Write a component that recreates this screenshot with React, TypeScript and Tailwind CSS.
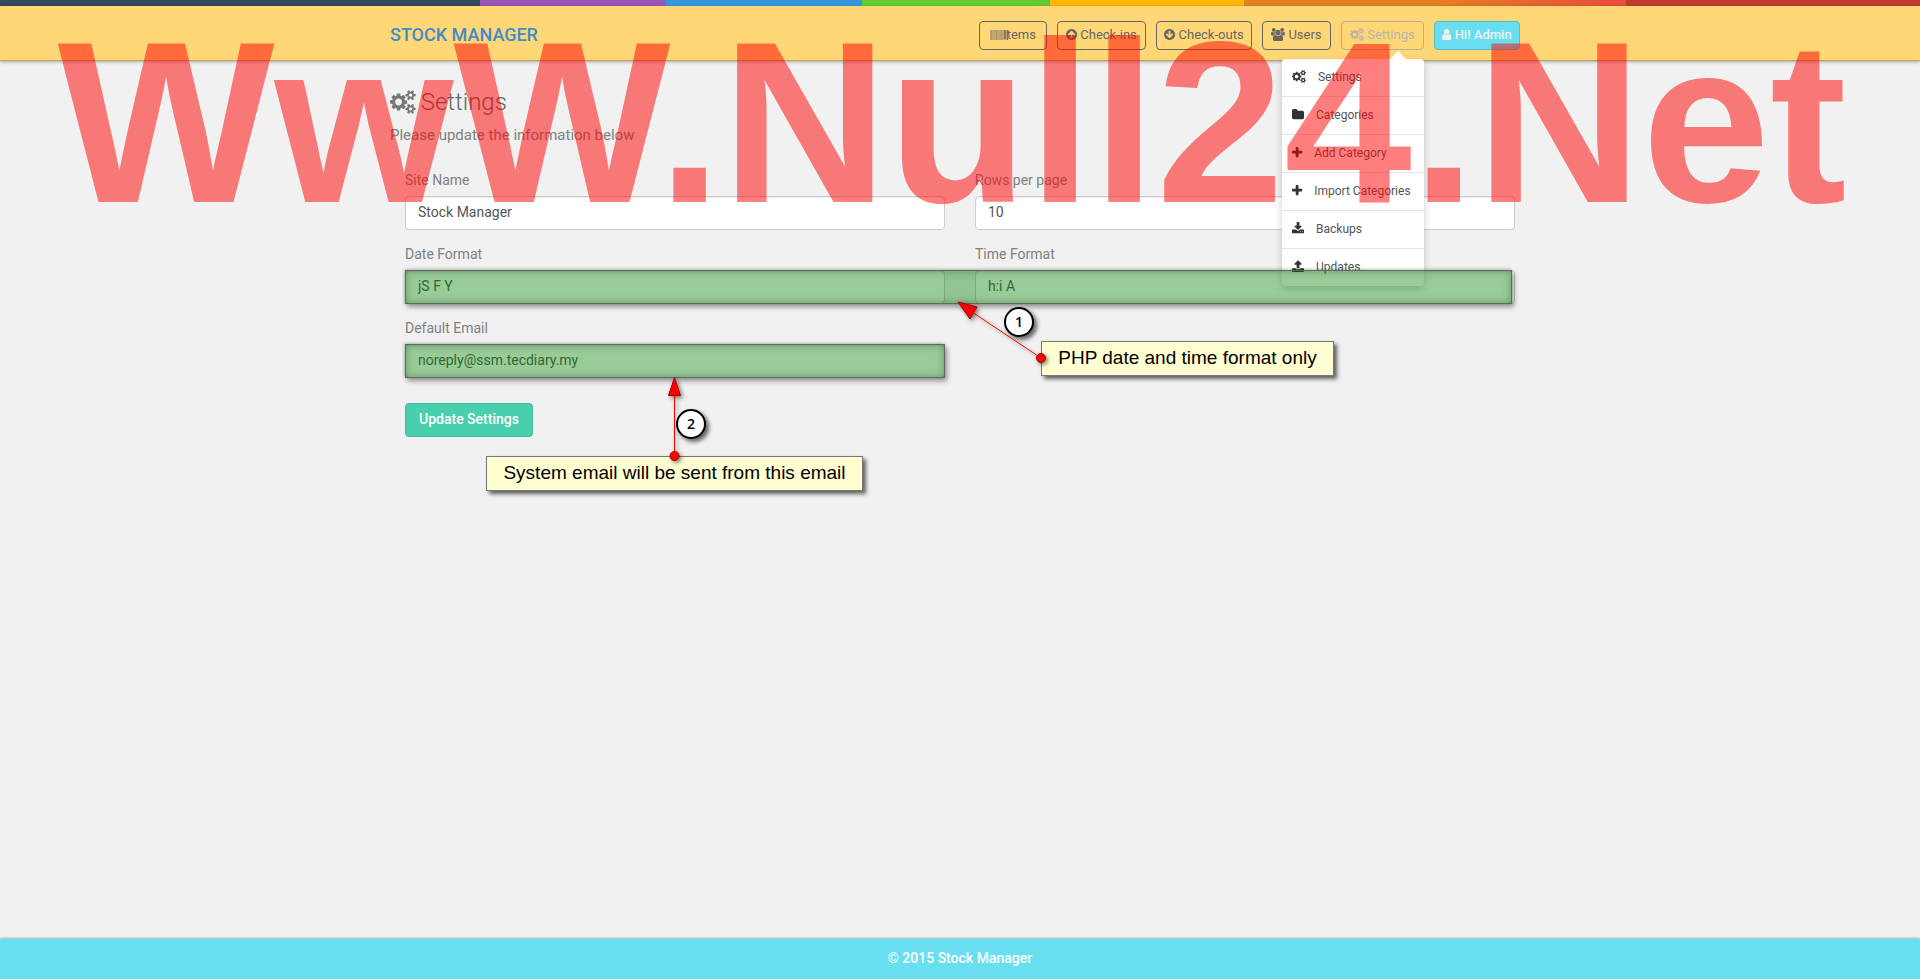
import React from "react";

type Glyph = { x: number; w: number; d: string };

const COGS: Glyph = {
  x: 0,
  w: 1920,
  d: "M896 896q0-106-75-181t-181-75-181 75-75 181 75 181 181 75 181-75 75-181zm768 512q0-52-38-90t-90-38-90 38-38 90q0 53 37.5 90.5t90.5 37.5 90.5-37.5 37.5-90.5zm0-1024q0-52-38-90t-90-38-90 38-38 90q0 53 37.5 90.5t90.5 37.5 90.5-37.5 37.5-90.5zm-384 421v185q0 10-7 19.5t-16 10.5l-155 24q-11 35-32 76 34 48 90 115 7 11 7 20 0 12-7 19-23 30-82.5 89.5t-78.5 59.5q-11 0-21-7l-115-90q-37 19-77 31-11 108-23 155-7 24-30 24h-186q-11 0-20-7.5t-10-17.5l-23-153q-34-10-75-31l-118 89q-7 7-20 7-11 0-21-8-144-133-144-160 0-9 7-19 10-14 41-53t47-61q-23-44-35-82l-152-24q-10-1-17-9.5t-7-19.5v-185q0-10 7-19.5t16-10.5l155-24q11-35 32-76-34-48-90-115-7-11-7-20 0-12 7-20 22-30 82-89t79-59q11 0 21 7l115 90q34-18 77-32 11-108 23-154 7-24 30-24h186q11 0 20 7.5t10 17.5l23 153q34 10 75 31l118-89q8-7 20-7 11 0 21 8 144 133 144 160 0 8-7 19-12 16-42 54t-45 60q23 48 34 82l152 23q10 2 17 10.5t7 19.5zm640 533v140q0 16-149 31-12 27-30 52 51 113 51 138 0 4-4 7-122 71-124 71-8 0-46-47t-52-68q-20 2-30 2t-30-2q-14 21-52 68t-46 47q-2 0-124-71-4-3-4-7 0-25 51-138-18-25-30-52-149-15-149-31v-140q0-16 149-31 13-29 30-52-51-113-51-138 0-4 4-7 4-2 35-20t59-34 30-16q8 0 46 46.5t52 67.5q20-2 30-2t30 2q51-71 92-112l6-2q4 0 124 70 4 3 4 7 0 25-51 138 17 23 30 52 149 15 149 31zm0-1024v140q0 16-149 31-12 27-30 52 51 113 51 138 0 4-4 7-122 71-124 71-8 0-46-47t-52-68q-20 2-30 2t-30-2q-14 21-52 68t-46 47q-2 0-124-71-4-3-4-7 0-25 51-138-18-25-30-52-149-15-149-31v-140q0-16 149-31 13-29 30-52-51-113-51-138 0-4 4-7 4-2 35-20t59-34 30-16q8 0 46 46.5t52 67.5q20-2 30-2t30 2q51-71 92-112l6-2q4 0 124 70 4 3 4 7 0 25-51 138 17 23 30 52 149 15 149 31z",
};
const UP: Glyph = {
  x: 128,
  w: 1536,
  d: "M1412 895q0-27-18-45l-362-362-91-91q-18-18-45-18t-45 18l-91 91-362 362q-18 18-18 45t18 45l91 91q18 18 45 18t45-18l189-189v502q0 26 19 45t45 19h128q26 0 45-19t19-45v-502l189 189q19 19 45 19t45-19l91-91q18-18 18-45zm252 1q0 209-103 385.5t-279.5 279.5-385.5 103-385.5-103-279.5-279.5-103-385.5 103-385.5 279.5-279.5 385.5-103 385.5 103 279.5 279.5 103 385.5z",
};
const USERS: Glyph = {
  x: 0,
  w: 1920,
  d: "M593 896q-162 5-265 128h-134q-82 0-138-40.5t-56-118.5q0-353 124-353 6 0 43.5 21t97.5 42.5 119 21.5q67 0 133-23-5 37-5 66 0 139 81 256zm1071 637q0 120-73 189.5t-194 69.5h-874q-121 0-194-69.5t-73-189.5q0-53 3.5-103.5t14-109 26.5-108.5 43-97.5 62-81 85.5-53.5 111.5-20q10 0 43 21.5t73 48 107 48 135 21.5 135-21.5 107-48 73-48 43-21.5q61 0 111.5 20t85.5 53.5 62 81 43 97.5 26.5 108.5 14 109 3.5 103.5zm-1024-1277q0 106-75 181t-181 75-181-75-75-181 75-181 181-75 181 75 75 181zm704 384q0 159-112.5 271.5t-271.5 112.5-271.5-112.5-112.5-271.5 112.5-271.5 271.5-112.5 271.5 112.5 112.5 271.5zm576 225q0 78-56 118.5t-138 40.5h-134q-103-123-265-128 81-117 81-256 0-29-5-66 66 23 133 23 59 0 119-21.5t97.5-42.5 43.5-21q124 0 124 353zm-128-609q0 106-75 181t-181 75-181-75-75-181 75-181 181-75 181 75 75 181z",
};
const USER: Glyph = {
  x: 256,
  w: 1280,
  d: "M1536 1399q0 109-62.5 187t-150.5 78h-854q-88 0-150.5-78t-62.5-187q0-85 8.5-160.5t31.5-152 58.5-131 94-89 134.5-34.5q131 128 313 128t313-128q76 0 134.5 34.5t94 89 58.5 131 31.5 152 8.5 160.5zm-256-887q0 159-112.5 271.5t-271.5 112.5-271.5-112.5-112.5-271.5 112.5-271.5 271.5-112.5 271.5 112.5 112.5 271.5z",
};
const FOLDER: Glyph = {
  x: 64,
  w: 1664,
  d: "M1728 608v704q0 92-66 158t-158 66h-1216q-92 0-158-66t-66-158v-960q0-92 66-158t158-66h320q92 0 158 66t66 158v32h672q92 0 158 66t66 158z",
};
const PLUS: Glyph = {
  x: 192,
  w: 1408,
  d: "M1600 736v192q0 40-28 68t-68 28h-416v416q0 40-28 68t-68 28h-192q-40 0-68-28t-28-68v-416h-416q-40 0-68-28t-28-68v-192q0-40 28-68t68-28h416v-416q0-40 28-68t68-28h192q40 0 68 28t28 68v416h416q40 0 68 28t28 68z",
};
const DOWNLOAD: Glyph = {
  x: 64,
  w: 1664,
  d: "M1344 1344q0-26-19-45t-45-19-45 19-19 45 19 45 45 19 45-19 19-45zm256 0q0-26-19-45t-45-19-45 19-19 45 19 45 45 19 45-19 19-45zm128-224v320q0 40-28 68t-68 28h-1472q-40 0-68-28t-28-68v-320q0-40 28-68t68-28h465l135 136q58 56 136 56t136-56l136-136h464q40 0 68 28t28 68zm-325-569q17 41-14 70l-448 448q-18 19-45 19t-45-19l-448-448q-31-29-14-70 17-39 59-39h256v-448q0-26 19-45t45-19h256q26 0 45 19t19 45v448h256q42 0 59 39z",
};
const UPLOAD: Glyph = {
  x: 64,
  w: 1664,
  d: "M1344 1472q0-26-19-45t-45-19-45 19-19 45 19 45 45 19 45-19 19-45zm256 0q0-26-19-45t-45-19-45 19-19 45 19 45 45 19 45-19 19-45zm128-224v320q0 40-28 68t-68 28h-1472q-40 0-68-28t-28-68v-320q0-40 28-68t68-28h427q21 56 70.5 92t110.5 36h256q61 0 110.5-36t70.5-92h427q40 0 68 28t28 68zm-325-648q-17 40-59 40h-256v448q0 26-19 45t-45 19h-256q-26 0-45-19t-19-45v-448h-256q-42 0-59-40-17-39 14-69l448-448q18-19 45-19t45 19l448 448q31 30 14 69z",
};

function Icon({ glyph, className = "" }: { glyph: Glyph; className?: string }) {
  return (
    <svg
      viewBox={`${glyph.x} 0 ${glyph.w} 1792`}
      className={`h-[1em] w-auto shrink-0 overflow-visible fill-current ${className}`}
      aria-hidden="true"
    >
      <path d={glyph.d} />
    </svg>
  );
}

function Barcode() {
  return (
    <svg viewBox="0 0 18 10" className="-mr-2 h-[10px] w-[18px] shrink-0" aria-hidden="true">
      <rect width="18" height="10" fill="#666" opacity=".42" />
      <path d="M1.500 0v10M6.500 0v10M11.500 0v10" stroke="#666" strokeWidth="1" opacity=".25" />
      <path d="M17.500 0v10" stroke="#666" strokeWidth="1" opacity=".8" />
    </svg>
  );
}

const navButton = "flex h-[29px] items-center justify-center gap-[3px] rounded border pb-[2px] text-[13px] whitespace-nowrap";
const navDark = "border-[#666] text-[#666]";

const menu = [
  { label: "Settings", glyph: COGS },
  { label: "Categories", glyph: FOLDER },
  { label: "Add Category", glyph: PLUS },
  { label: "Import Categories", glyph: PLUS },
  { label: "Backups", glyph: DOWNLOAD },
  { label: "Updates", glyph: UPLOAD },
];

function SettingsMenu() {
  return (
    <div className="absolute top-[38px] right-0 z-10 w-[142px] rounded bg-white shadow-[0_3px_8px_rgba(0,0,0,0.2)]">
      <svg viewBox="0 0 16 8" className="absolute -top-2 right-[18px] h-2 w-4 fill-white" aria-hidden="true">
        <path d="M0 8L8 0l8 8z" />
      </svg>
      <ul className="divide-y divide-[#e5e5e5]">
        {menu.map((m) => (
          <li key={m.label}>
            <a href="#" className="flex h-[37px] items-center gap-3 px-[10px] pb-[2px] text-xs text-[#555] whitespace-nowrap">
              <Icon glyph={m.glyph} className="text-[13px] text-[#333]" />
              {m.label}
            </a>
          </li>
        ))}
      </ul>
    </div>
  );
}

function Field({ id, label, value }: { id: string; label: string; value: string }) {
  return (
    <div className="flex flex-col px-[15px]">
      <label htmlFor={id} className="mb-[6px] text-sm leading-5 text-[#808080]">
        {label}
      </label>
      <input
        id={id}
        defaultValue={value}
        className="h-[34px] w-full rounded border border-[#ccc] bg-white px-3 pb-[2px] text-sm text-[#555] shadow-[inset_0_1px_1px_rgba(0,0,0,0.075)] outline-none"
      />
    </div>
  );
}

const highlight =
  "pointer-events-none absolute z-20 h-[34px] border border-[#606860] bg-[#008000]/40 shadow-[2px_3px_5px_rgba(0,0,0,0.4),-1px_-1px_3px_rgba(0,0,0,0.2),inset_0_0_8px_rgba(0,60,0,0.35)]";
const callout =
  "absolute z-30 flex h-[35px] items-center justify-center border border-[#777] bg-[#ffffd2] font-['Liberation_Sans',sans-serif] text-[19px] text-black whitespace-nowrap shadow-[3px_3px_4px_rgba(0,0,0,0.6)]";
const badge =
  "absolute z-30 flex size-[30px] items-center justify-center rounded-full border-2 border-black bg-white font-['Open_Sans',sans-serif] text-sm font-semibold text-black shadow-[3px_3px_4px_rgba(0,0,0,0.6)]";

export default function App() {
  return (
    <div className="relative flex min-h-screen flex-col overflow-hidden bg-[#f1f1f1] font-[Roboto,sans-serif]">
      <div className="h-[6px] bg-[linear-gradient(to_right,#34495e_25%,#9b59b6_25%,#9b59b6_34.7%,#3498db_34.7%,#3498db_44.9%,#62cb31_44.9%,#62cb31_54.7%,#ffb606_54.7%,#ffb606_64.8%,#e67e22_64.8%,#e67e22_75%,#e74c3c_84.7%,#c0392b_84.7%)]" />

      <header className="border-b border-[#c3a35c] bg-[#ffd777] shadow-[0_1px_3px_rgba(0,0,0,0.3)]">
        <div className="mx-auto flex h-[54px] w-full max-w-[1170px] items-start justify-between pt-[15px] pr-[25px] pl-[15px]">
          <a href="#" className="text-lg leading-[27px] font-medium text-[#428bca]">
            STOCK MANAGER
          </a>
          <nav className="flex gap-[10px]">
            <button className={`${navButton} ${navDark} w-[68px]`}>
              <Barcode />
              Items
            </button>
            <button className={`${navButton} ${navDark} w-[89px]`}>
              <Icon glyph={UP} />
              Check-ins
            </button>
            <button className={`${navButton} ${navDark} w-[96px]`}>
              <Icon glyph={UP} className="rotate-180" />
              Check-outs
            </button>
            <button className={`${navButton} ${navDark} w-[69px]`}>
              <Icon glyph={USERS} />
              Users
            </button>
            <div className="relative">
              <button className={`${navButton} w-[83px] border-[#b8ae98] text-[#b8b4a8]`}>
                <Icon glyph={COGS} />
                Settings
              </button>
              <SettingsMenu />
            </div>
            <button className={`${navButton} w-[86px] border-[#5bbcc4] bg-[#68dff0] font-medium text-[#f1f1f1]`}>
              <Icon glyph={USER} />
              Hi! Admin
            </button>
          </nav>
        </div>
      </header>

      <main className="relative mx-auto w-full max-w-[1170px] flex-1 px-[15px] pt-[25px]">
        <h1 className="flex items-center gap-[5px] text-2xl leading-8 font-light text-[#666]">
          <Icon glyph={COGS} className="text-[#777]" />
          Settings
        </h1>
        <p className="mt-[7px] text-[15px] leading-5 text-[#808080]">Please update the information below</p>

        <form className="mt-[25px]" onSubmit={(e) => e.preventDefault()}>
          <div className="grid grid-cols-2 gap-y-[14px]">
            <Field id="site" label="Site Name" value="Stock Manager" />
            <Field id="rows" label="Rows per page" value="10" />
            <div className="relative col-span-2 grid grid-cols-2">
              <Field id="date" label="Date Format" value="jS F Y" />
              <Field id="time" label="Time Format" value="h:i A" />
              <div className={`${highlight} right-[18px] bottom-0 left-[15px]`} />
            </div>
            <div className="relative">
              <Field id="email" label="Default Email" value="noreply@ssm.tecdiary.my" />
              <div className={`${highlight} right-[15px] bottom-0 left-[15px]`} />
            </div>
          </div>
          <button className="mt-[25px] ml-[15px] h-[34px] rounded border border-[#3dbd9c] bg-[#48cfad] px-[13px] pb-[2px] text-sm font-medium text-white">
            Update Settings
          </button>
        </form>

        <div className={`${callout} top-[280px] left-[666px] w-[293px]`}>PHP date and time format only</div>
        <div className={`${callout} top-[395px] left-[111px] w-[377px]`}>System email will be sent from this email</div>
        <svg
          viewBox="0 0 700 420"
          className="pointer-events-none absolute top-0 left-0 z-40 h-[420px] w-[700px] drop-shadow-[2px_2px_2px_rgba(0,0,0,0.5)]"
          aria-hidden="true"
        >
          <g fill="red" stroke="#a00000" strokeWidth="1">
            <path d="M666 297L594 249" stroke="red" />
            <path d="M583 241l19 5-7 12z" />
            <circle cx="666" cy="297" r="4.5" />
            <path d="M299.500 395V334" stroke="red" />
            <path d="M299.500 316.500l6 18h-12z" />
            <circle cx="299.500" cy="395" r="4.500" />
          </g>
        </svg>
        <div className={`${badge} top-[246px] left-[629px]`}>1</div>
        <div className={`${badge} top-[348px] left-[301px]`}>2</div>
      </main>

      <footer className="flex h-10 items-center justify-center bg-[#68dff0] pb-[2px] text-sm font-medium text-white shadow-[0_-1px_2px_rgba(0,0,0,0.3)]">
        © 2015 Stock Manager
      </footer>

      <div className="pointer-events-none absolute inset-x-0 top-0 z-50 flex justify-center pr-4 font-['Liberation_Sans',sans-serif] text-[230px] leading-[246px] font-bold text-[#ff0000]/50 whitespace-nowrap">
        WwW.Null24.Net
      </div>
    </div>
  );
}
